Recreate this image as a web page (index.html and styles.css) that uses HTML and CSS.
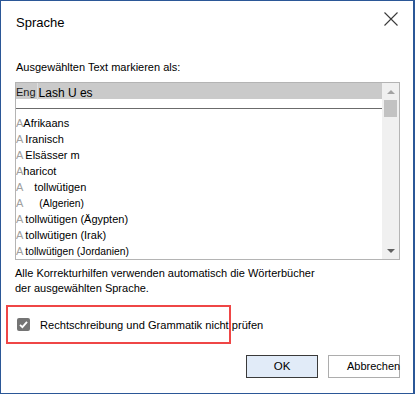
FILE: index.html
```html
<!DOCTYPE html>
<html lang="de">
<head>
<meta charset="utf-8">
<title>Sprache</title>
<link rel="stylesheet" href="styles.css">
</head>
<body>
<div class="dialog">
  <div class="titlebar">
    <div class="title">Sprache</div>
    <svg class="close" width="14" height="14" viewBox="0 0 14 14" aria-label="Schließen">
      <path d="M0.5 0.5 L13.5 13.5 M13.5 0.5 L0.5 13.5" stroke="#3a3a3a" stroke-width="1.1" fill="none"/>
    </svg>
  </div>

  <div class="prompt">Ausgewählten Text markieren als:</div>

  <div class="listbox">
    <div class="items">
      <div class="selected"><span class="eng">Eng</span><span class="divider"></span><span class="lash">Lash U es</span></div>
      <div class="sep"></div>
      <div class="item"><span class="glyph">A</span><span class="t0">Afrikaans</span></div>
      <div class="item"><span class="glyph">A</span><span class="t2">Iranisch</span></div>
      <div class="item"><span class="glyph">A</span><span class="t2">Elsässer m</span></div>
      <div class="item"><span class="glyph">A</span><span class="t0">haricot</span></div>
      <div class="item"><span class="glyph">A</span><span class="t11">tollwütigen</span></div>
      <div class="item"><span class="glyph">A</span><span class="t16 small">(Algerien)</span></div>
      <div class="item"><span class="glyph">A</span><span class="t2">tollwütigen (Ägypten)</span></div>
      <div class="item"><span class="glyph">A</span><span class="t2">tollwütigen (Irak)</span></div>
      <div class="item"><span class="glyph">A</span><span class="t2 small">tollwütigen (Jordanien)</span></div>
    </div>
    <div class="scrollbar">
      <div class="sb-btn"><span class="arrow-up"></span></div>
      <div class="thumb"></div>
      <div class="track"></div>
      <div class="sb-btn"><span class="arrow-down"></span></div>
    </div>
  </div>

  <div class="note">Alle Korrekturhilfen verwenden automatisch die Wörterbücher<br>der ausgewählten Sprache.</div>

  <div class="checkrow">
    <span class="checkbox">
      <svg width="13" height="13" viewBox="0 0 13 13"><path d="M3 6.8 L5.4 9.2 L10 3.8" stroke="#fff" stroke-width="1.8" fill="none"/></svg>
    </span>
    <span class="checklabel">Rechtschreibung und Grammatik nicht prüfen</span>
  </div>

  <div class="buttons">
    <div class="btn btn-ok">OK</div>
    <div class="btn btn-cancel">Abbrechen</div>
  </div>
</div>
</body>
</html>
```

FILE: styles.css
```css
* { box-sizing: border-box; }

html, body {
  margin: 0;
  padding: 0;
  background: #ffffff;
}

body {
  font-family: "Liberation Sans", Arial, sans-serif;
  font-size: 11px;
  color: #000;
}

.dialog {
  width: 415px;
  height: 394px;
  border-style: solid;
  border-color: #2b5797;
  border-width: 1px 2px 1px 1px;
  background: #fff;
  display: flex;
  flex-direction: column;
  overflow: hidden;
}

.titlebar {
  display: flex;
  justify-content: space-between;
  align-items: flex-start;
}

.title {
  padding: 14px 0 0 15px;
  font-size: 13px;
  line-height: 16px;
}

.close {
  display: block;
  margin: 11px 15px 0 0;
}

.prompt {
  margin: 29px 0 0 15px;
  line-height: 15px;
}

.listbox {
  margin: 7px 0 0 14px;
  width: 385px;
  height: 178px;
  border: 1px solid #b4b4b4;
  display: flex;
  overflow: hidden;
}

.items {
  flex: 1;
  display: flex;
  flex-direction: column;
  overflow: hidden;
}

.selected {
  height: 16px;
  background: #cacaca;
  display: flex;
  align-items: baseline;
  padding-top: 4px;
  line-height: 13px;
  flex-shrink: 0;
}

.eng {
  font-size: 11px;
  color: #1a1a1a;
  position: relative;
  top: -1px;
}

.divider {
  align-self: stretch;
  width: 1px;
  margin: -4px 0 -1px 1px;
  background: #dedede;
}

.lash {
  font-size: 12px;
  margin-left: 1px;
}

.sep {
  margin-top: 9px;
  height: 1px;
  background: #6b6b6b;
  flex-shrink: 0;
}

.item {
  height: 16px;
  line-height: 16px;
  white-space: nowrap;
  flex-shrink: 0;
  display: flex;
  align-items: baseline;
}

.sep + .item { margin-top: 6px; }

.glyph {
  color: #a0a0a0;
  font-size: 11px;
}

.t0 { margin-left: 0; }
.t2 { margin-left: 2px; }
.t11 { margin-left: 11px; }
.t16 { margin-left: 16px; }
.small { font-size: 10.3px; }

.scrollbar {
  width: 17px;
  background: #f0f0f0;
  display: flex;
  flex-direction: column;
  align-items: center;
  flex-shrink: 0;
}

.sb-btn {
  height: 17px;
  width: 17px;
  display: flex;
  align-items: center;
  justify-content: center;
}

.arrow-up {
  width: 0;
  height: 0;
  border-left: 4px solid transparent;
  border-right: 4px solid transparent;
  border-bottom: 4px solid #a3a3a3;
}

.arrow-down {
  width: 0;
  height: 0;
  border-left: 4px solid transparent;
  border-right: 4px solid transparent;
  border-top: 4px solid #606060;
}

.thumb {
  width: 13px;
  height: 17px;
  background: #c2c2c2;
}

.track { flex: 1; }

.note {
  margin: 6px 0 0 14px;
  line-height: 15px;
}

.checkrow {
  margin: 9px 0 0 5px;
  width: 225px;
  height: 39px;
  border: 2px solid #ef4646;
  display: flex;
  align-items: flex-start;
  padding: 11px 0 0 9px;
  white-space: nowrap;
  overflow: visible;
}

.checkbox {
  width: 13px;
  height: 13px;
  border-radius: 2px;
  background: #747474;
  display: block;
  flex-shrink: 0;
}

.checkbox svg { display: block; }

.checklabel {
  margin-left: 10px;
  line-height: 15px;
  font-size: 11.1px;
}

.buttons {
  margin: 11px 13px 0 0;
  display: flex;
  justify-content: flex-end;
  gap: 10px;
}

.btn {
  width: 72px;
  height: 23px;
  line-height: 21px;
  white-space: nowrap;
}

.btn-ok {
  border: 1px solid #3a3a3a;
  background: #e1ebf8;
  text-align: center;
  font-size: 11.5px;
}

.btn-cancel {
  border: 1px solid #adadad;
  background: #fff;
  padding-left: 18px;
}
```
